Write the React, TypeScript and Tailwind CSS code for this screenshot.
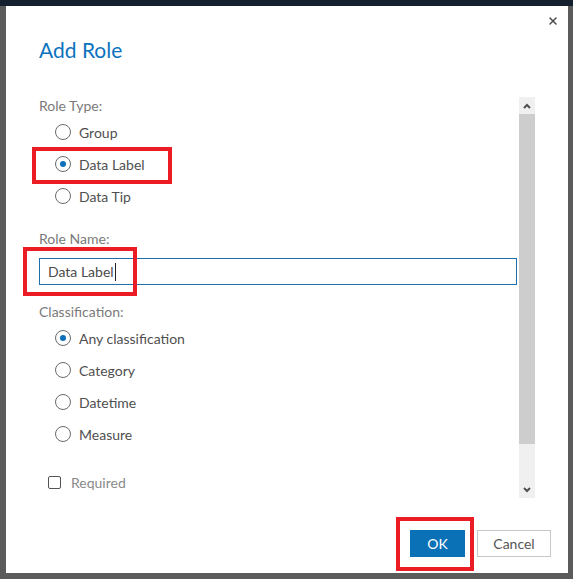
import { X } from "lucide-react";

const font = { fontFamily: "Lato, 'Open Sans', 'Liberation Sans', sans-serif" };

function Radio({ label, checked = false }: { label: string; checked?: boolean }) {
  return (
    <div className="flex h-8 items-center gap-2 pl-4">
      <span className="flex h-4 w-4 items-center justify-center rounded-full border border-[#6b6b6b] bg-white">
        {checked ? <span className="h-[6px] w-[6px] rounded-full bg-[#0b6fba]" /> : null}
      </span>
      <span className="text-[14px] text-[#4f4f4f]">{label}</span>
    </div>
  );
}

function ScrollBar() {
  return (
    <div className="flex h-[401px] w-4 flex-col bg-[#f0f0f0]">
      <div className="flex h-[17px] items-center justify-center">
        <svg width="8" height="6" viewBox="0 0 8 6">
          <path d="M1 5 L4 2 L7 5" fill="none" stroke="#505050" strokeWidth="2" />
        </svg>
      </div>
      <div className="h-[330px] bg-[#cdcdcd]" />
      <div className="flex flex-1 items-end justify-center pb-[5px]">
        <svg width="8" height="6" viewBox="0 0 8 6">
          <path d="M1 1 L4 4 L7 1" fill="none" stroke="#505050" strokeWidth="2" />
        </svg>
      </div>
    </div>
  );
}

export default function App() {
  return (
    <div className="relative h-[579px] w-[573px] overflow-hidden bg-[#5b5b5b]" style={font}>
      <div className="h-[6px] bg-[#15202e]" />

      <div className="absolute left-[6px] top-[6px] flex h-[567px] w-[562px] flex-col bg-white">
        <button type="button" className="absolute right-[9px] top-[9px] text-[#4a4a4a]">
          <X className="h-3 w-3" strokeWidth={3} />
        </button>

        <h1 className="px-[33px] pt-[30px] text-[21px] leading-7 text-[#0b73bd]">Add Role</h1>

        <div className="mt-[33px] flex pl-[33px]">
          <div className="h-[401px] w-[478px] overflow-hidden">
            <div className="-mt-px">
              <p className="h-5 text-[14px] leading-5 text-[#7a7a7a]">Role Type:</p>
              <Radio label="Group" />
              <Radio label="Data Label" checked />
              <Radio label="Data Tip" />

              <p className="mt-[17px] h-5 text-[14px] leading-5 text-[#7a7a7a]">Role Name:</p>
              <div className="mt-[9px] flex h-[27px] items-center border border-[#1f6fab] px-2 text-[14px] text-[#4a4a4a]">
                Data Label<span className="ml-px h-[18px] w-px bg-[#222]" />
              </div>

              <p className="mt-[17px] h-5 text-[14px] leading-5 text-[#7a7a7a]">Classification:</p>
              <Radio label="Any classification" checked />
              <Radio label="Category" />
              <Radio label="Datetime" />
              <Radio label="Measure" />

              <div className="mt-[20px] flex h-6 items-center gap-[10px] pl-[9px]">
                <span className="h-[13px] w-[13px] rounded-[2px] border border-[#555]" />
                <span className="text-[14px] text-[#8a8a8a]">Required</span>
              </div>
            </div>
          </div>
          <div className="ml-[2px]">
            <ScrollBar />
          </div>
        </div>

        <div className="mt-auto flex justify-end gap-3 pb-[16px] pr-[17px]">
          <button type="button" className="h-[27px] w-[55px] bg-[#0b71b7] text-[14px] text-white">
            OK
          </button>
          <button type="button" className="h-[27px] w-[74px] border border-[#c8c8c8] bg-white text-[14px] text-[#555]">
            Cancel
          </button>
        </div>
      </div>

      <div className="absolute left-[32px] top-[147px] h-[37px] w-[140px] border-4 border-[#ec1c24]" />
      <div className="absolute left-[23px] top-[247px] h-[49px] w-[114px] border-4 border-[#ec1c24]" />
      <div className="absolute left-[396px] top-[517px] h-[54px] w-[78px] border-4 border-[#ec1c24]" />
    </div>
  );
}
